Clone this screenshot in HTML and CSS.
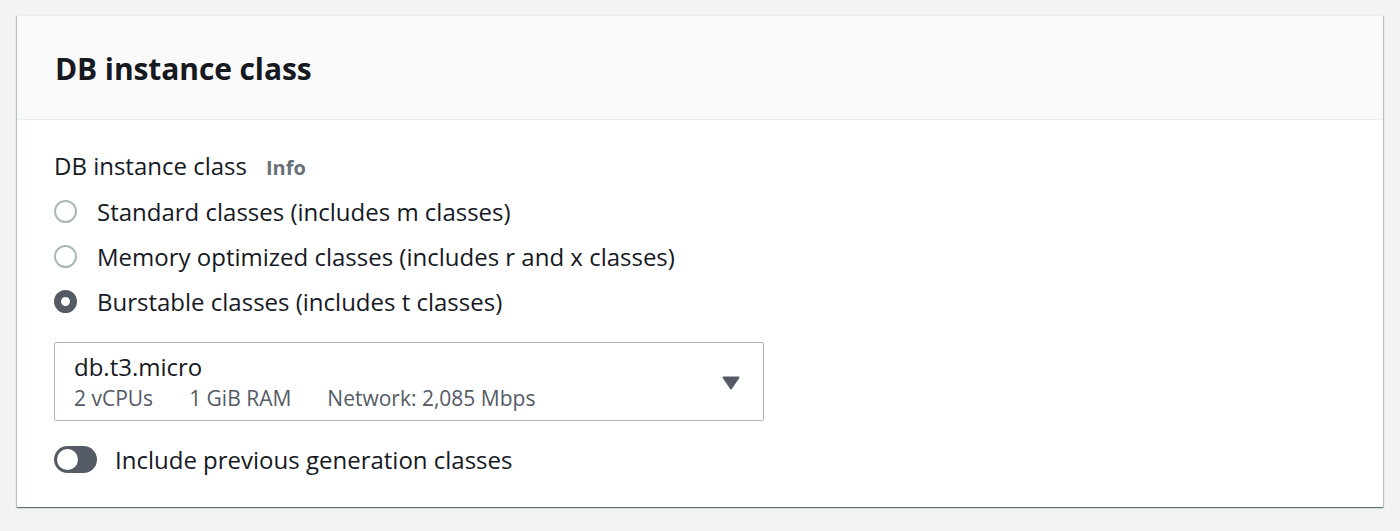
FILE: index.html
```html
<!DOCTYPE html>
<html>
<head>
<meta charset="utf-8">
<link rel="stylesheet" href="styles.css">
</head>
<body>
<div class="page">
  <section class="card">
    <header class="card-header">
      <h2 class="title">DB instance class</h2>
    </header>
    <div class="card-body">
      <div class="label-row">
        <span class="label">DB instance class</span>
        <span class="info">Info</span>
      </div>
      <div class="radios">
        <label class="radio-row"><span class="radio"></span><span class="radio-text">Standard classes (includes m classes)</span></label>
        <label class="radio-row"><span class="radio"></span><span class="radio-text">Memory optimized classes (includes r and x classes)</span></label>
        <label class="radio-row"><span class="radio checked"></span><span class="radio-text">Burstable classes (includes t classes)</span></label>
      </div>
      <div class="select">
        <div class="select-content">
          <div class="select-main">db.t3.micro</div>
          <div class="select-tags">
            <span class="tag">2 vCPUs</span>
            <span class="tag">1 GiB RAM</span>
            <span class="tag">Network: 2,085 Mbps</span>
          </div>
        </div>
        <svg class="caret" width="18" height="14" viewBox="0 0 18 14"><path d="M1.5 1.5 H16.5 L9 12.5 Z" fill="#545b64" stroke="#545b64" stroke-width="2" stroke-linejoin="round"/></svg>
      </div>
      <div class="toggle-row">
        <span class="toggle"><span class="knob"></span></span>
        <span class="toggle-text">Include previous generation classes</span>
      </div>
    </div>
  </section>
</div>
</body>
</html>
```

FILE: styles.css
```css
* { box-sizing: border-box; }
html, body { margin: 0; padding: 0; }
body {
  background: #f2f3f3;
  font-family: "Open Sans", "Noto Sans", sans-serif;
  color: #16191f;
  width: 1400px;
  height: 531px;
  overflow: hidden;
}
.page {
  padding: 15px 17px 0 17px;
}
.card {
  background: #fff;
  border-top: 1px solid #eaeded;
  box-shadow: 0 1px 1px 0 rgba(0,28,36,.35), 1px 1px 1px 0 rgba(0,28,36,.2), -1px 1px 1px 0 rgba(0,28,36,.2);
  height: 492px;
}
.card-header {
  background: #fafafa;
  border-bottom: 1px solid #eaeded;
  height: 104px;
  display: flex;
  align-items: center;
  padding: 0 38px;
}
.title {
  margin: 0;
  font-size: 30px;
  font-weight: 700;
  letter-spacing: -0.1px;
  line-height: 1;
  padding-top: 3px;
}
.card-body {
  padding: 28px 38px 0 37px;
}
.label-row {
  display: flex;
  align-items: baseline;
  gap: 19px;
  height: 36px;
}
.label {
  font-size: 24px;
  line-height: 36px;
}
.info {
  font-size: 20px;
  font-weight: 700;
  color: #687078;
}
.radios {
  display: flex;
  flex-direction: column;
  margin-top: 5px;
}
.radio-row {
  display: flex;
  align-items: center;
  height: 45px;
}
.radio {
  width: 23px;
  height: 23px;
  border-radius: 50%;
  border: 2px solid #aab7b8;
  margin-left: 0;
  margin-right: 20px;
  flex: none;
}
.radio.checked {
  border: 7px solid #545b64;
  background: #fff;
}
.radio-text {
  font-size: 24px;
  line-height: 36px;
}
.select {
  margin-top: 18px;
  width: 710px;
  height: 79px;
  border: 1px solid #aab7b8;
  border-radius: 2px;
  display: flex;
  align-items: center;
  justify-content: space-between;
  padding: 0 23px 0 19px;
}
.select-content {
  display: flex;
  flex-direction: column;
}
.select-main {
  font-size: 24px;
  line-height: 32px;
}
.select-tags {
  display: flex;
  gap: 36px;
  font-size: 21px;
  color: #545b64;
  line-height: 30px;
}
.caret {
  margin-top: 3px;
}
.toggle-row {
  display: flex;
  align-items: center;
  margin-top: 22px;
  gap: 18px;
}
.toggle {
  width: 43px;
  height: 27px;
  border-radius: 14px;
  background: #545b64;
  display: flex;
  align-items: center;
  padding: 0 3px;
  margin-left: 0;
}
.knob {
  width: 21px;
  height: 21px;
  border-radius: 50%;
  background: #fff;
}
.toggle-text {
  font-size: 24px;
}
```
